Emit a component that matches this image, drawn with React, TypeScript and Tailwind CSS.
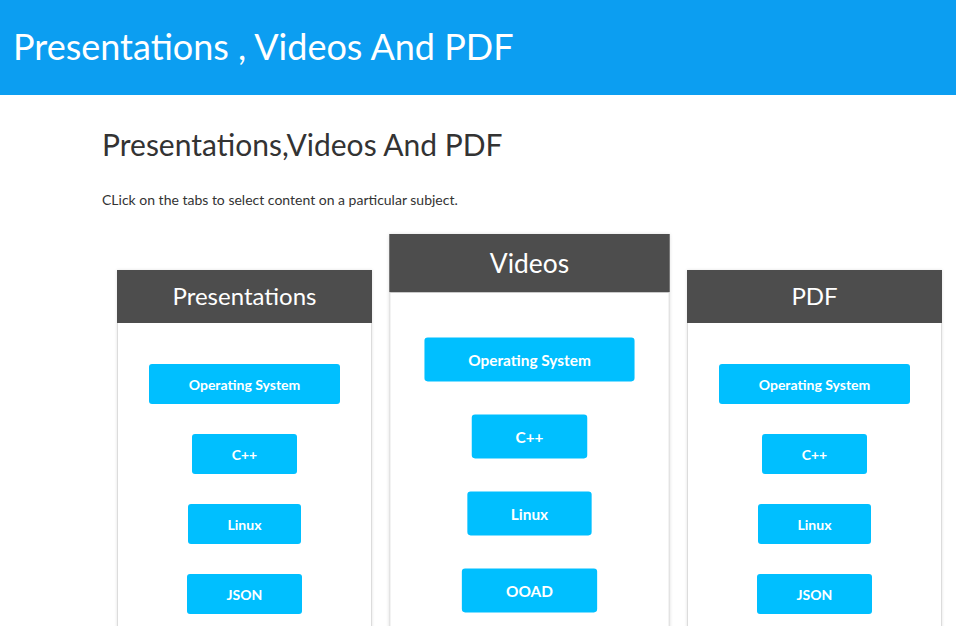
import React from 'react';

type Card = { title: string; items: string[]; featured?: boolean };

const cards: Card[] = [
  { title: 'Presentations', items: ['Operating System', 'C++', 'Linux', 'JSON'] },
  { title: 'Videos', items: ['Operating System', 'C++', 'Linux', 'OOAD'], featured: true },
  { title: 'PDF', items: ['Operating System', 'C++', 'Linux', 'JSON'] },
];

const SubjectCard: React.FC<{ card: Card }> = ({ card }) => (
  <div
    className={`w-[255px] shrink-0 bg-white shadow-[0_0_3px_rgba(0,0,0,0.12)] ${
      card.featured ? 'scale-[1.1] origin-top z-10' : 'mt-[36px]'
    }`}
  >
    <div className="h-[53px] bg-[#4d4d4d] flex items-center justify-center">
      <h3 className="text-[24px] text-white leading-none pb-[2px]">{card.title}</h3>
    </div>
    <div className="border border-t-0 border-[#dcdcdc] flex flex-col items-center gap-[30px] pt-[41px] pb-[40px]">
      {card.items.map((item) => (
        <button
          key={item}
          className="h-[40px] px-[40px] rounded-[3px] bg-[#00bfff] text-white font-bold text-[14px]"
        >
          {item}
        </button>
      ))}
    </div>
  </div>
);

export default function App() {
  return (
    <div
      className="min-h-screen bg-white text-[#333]"
      style={{ fontFamily: 'Lato, "Open Sans", sans-serif' }}
    >
      <header className="h-[95px] bg-[#0c9ef1] flex items-center px-[13px]">
        <h1 className="text-[36px] text-white leading-none pb-[3px]">Presentations , Videos And PDF</h1>
      </header>
      <main className="pl-[102px] pt-[34px]">
        <h2 className="text-[30px] leading-none">Presentations,Videos And PDF</h2>
        <p className="text-[14px] mt-[30px]">CLick on the tabs to select content on a particular subject.</p>
        <div className="flex gap-[30px] pl-[15px] mt-[24px]">
          {cards.map((c) => (
            <SubjectCard key={c.title} card={c} />
          ))}
        </div>
      </main>
    </div>
  );
}
